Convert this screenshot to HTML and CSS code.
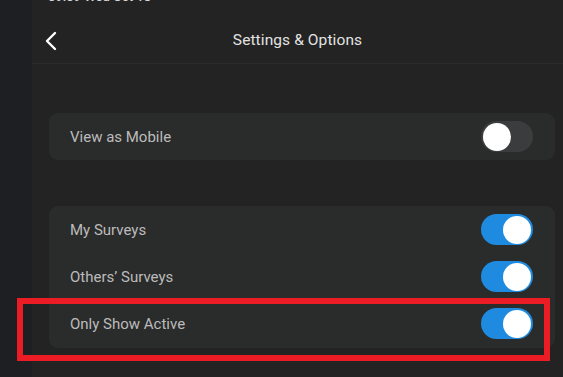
FILE: index.html
```html
<!DOCTYPE html>
<html>
<head>
<meta charset="utf-8">
<link rel="stylesheet" href="styles.css">
</head>
<body>
<div class="rail"></div>
<div class="main">
  <div class="status"><span>09:09 Wed Oct 18</span></div>
  <div class="header">
    <svg class="back" width="14" height="20" viewBox="0 0 14 20"><path d="M11 2 L3 10 L11 18" fill="none" stroke="#ffffff" stroke-width="2.4" stroke-linecap="round" stroke-linejoin="round"/></svg>
    <div class="title">Settings &amp; Options</div>
  </div>
  <div class="content">
    <div class="card card-single">
      <div class="row"><span class="label">View as Mobile</span><span class="toggle"><span class="knob"></span></span></div>
    </div>
    <div class="card card-group">
      <div class="row"><span class="label">My Surveys</span><span class="toggle on"><span class="knob"></span></span></div>
      <div class="row"><span class="label">Others’ Surveys</span><span class="toggle on"><span class="knob"></span></span></div>
      <div class="row"><span class="label">Only Show Active</span><span class="toggle on"><span class="knob"></span></span></div>
    </div>
  </div>
</div>
<div class="highlight"></div>
</body>
</html>
```
FILE: styles.css
```css
html, body {
  margin: 0;
  padding: 0;
  height: 100%;
}
body {
  background: #1e1f22;
  display: flex;
  font-family: Roboto, "Noto Sans", sans-serif;
  overflow: hidden;
}
.rail {
  width: 32px;
  flex: none;
}
.main {
  flex: 1;
  background: #232323;
  display: flex;
  flex-direction: column;
}
.status {
  height: 4px;
  overflow: hidden;
  padding-left: 16px;
}
.status span {
  display: block;
  margin-top: -11px;
  font-size: 13px;
  line-height: 15px;
  color: #d8d8d8;
  font-weight: 500;
}
.header {
  height: 59px;
  border-bottom: 1px solid #2b2b2b;
  display: flex;
  align-items: center;
  justify-content: center;
  position: relative;
}
.back {
  position: absolute;
  left: 12px;
  top: 27px;
}
.title {
  color: #e2e2e2;
  font-size: 15.5px;
  letter-spacing: 0.1px;
  margin-top: 12px;
}
.content {
  padding: 49px 8px 0 17px;
  display: flex;
  flex-direction: column;
  gap: 46px;
}
.card {
  background: #2a2b2b;
  border-radius: 9px;
  padding: 0 22px 0 21px;
}
.card-group {
  padding-bottom: 1px;
}
.row {
  height: 47px;
  display: flex;
  align-items: center;
  justify-content: space-between;
}
.label {
  color: #bcbcbc;
  font-size: 15px;
}
.toggle {
  width: 52px;
  height: 31px;
  border-radius: 16px;
  background: #3b3c3e;
  display: flex;
  align-items: center;
  padding: 0 2px;
  box-sizing: border-box;
}
.toggle .knob {
  width: 28px;
  height: 28px;
  border-radius: 50%;
  background: #ffffff;
}
.toggle.on {
  background: #1f8be0;
  justify-content: flex-end;
}
.highlight {
  position: absolute;
  left: 17px;
  top: 298px;
  width: 533px;
  height: 63px;
  box-sizing: border-box;
  border: 6px solid #ec1c24;
}
```
